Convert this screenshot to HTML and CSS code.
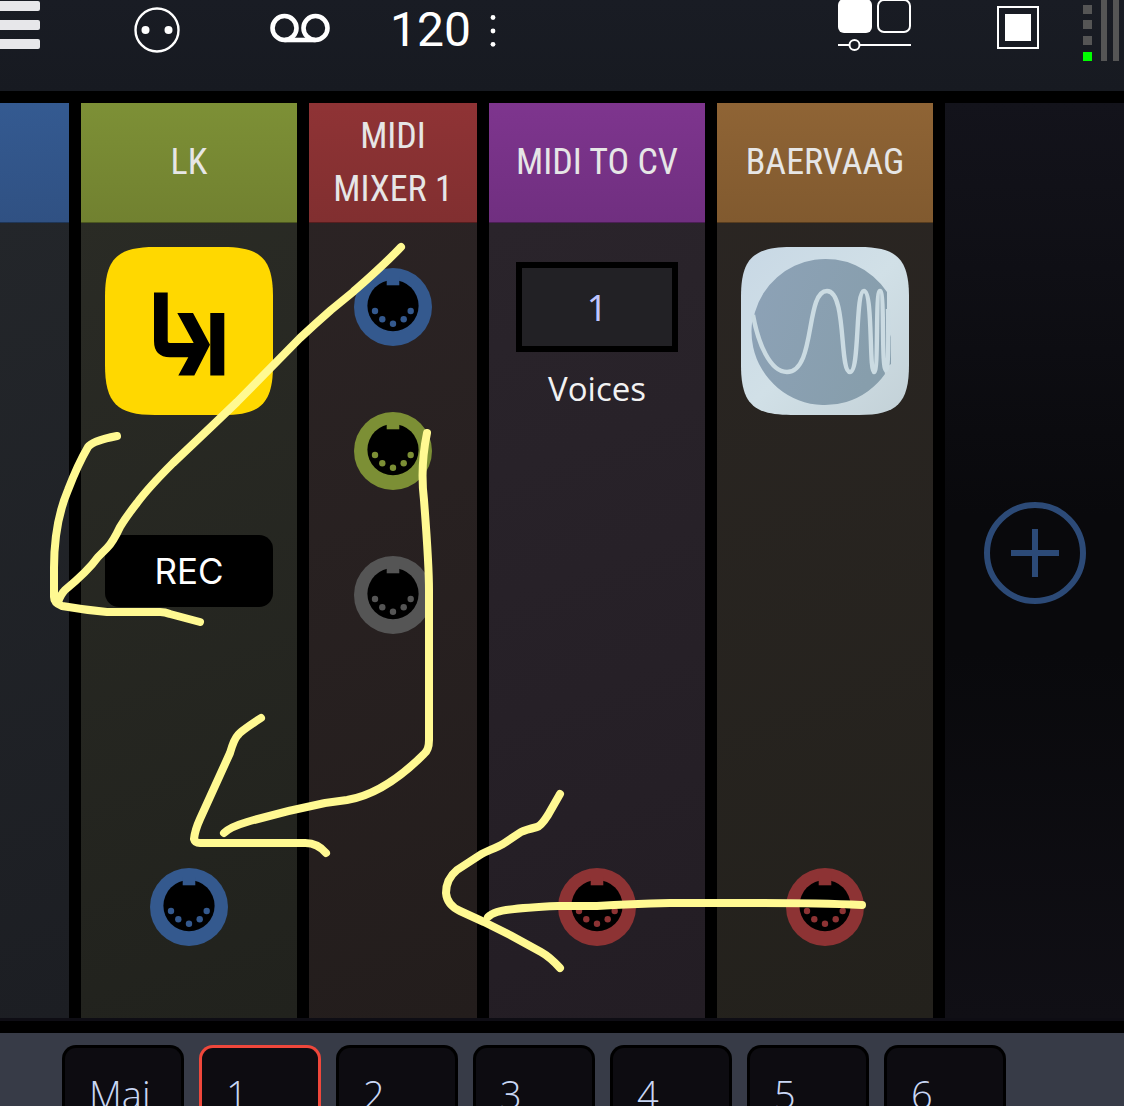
FILE: index.html
```html
<!DOCTYPE html>
<html lang="en">
	<head>
		<meta charset="UTF-8" />
		<title>Modular rack</title>
		<link rel="stylesheet" href="styles.css">
	</head>
	<body>
		<svg class="defs" aria-hidden="true">
			<symbol id="din" viewBox="0 0 78 78">
				<circle cx="39" cy="39" r="39" fill="currentColor"/>
				<circle cx="39" cy="37.7" r="25.6"/>
				<path d="M32.7 9h12.6v8.3H32.7z" fill="currentColor"/>
				<g fill="currentColor">
					<circle cx="21" cy="43" r="3.2"/>
					<circle cx="28.3" cy="51.3" r="3.2"/>
					<circle cx="39" cy="55.7" r="3.2"/>
					<circle cx="49.7" cy="51.3" r="3.2"/>
					<circle cx="56.7" cy="43" r="3.2"/>
				</g>
			</symbol>
		</svg>
		<header class="toolbar">
			<button class="menu" aria-label="Menu">
				<svg width="40" height="52" viewBox="0 0 40 52" fill="#e7e7ea">
					<rect x="-6" y="1" width="46" height="10" rx="2"/>
					<rect x="-6" y="20" width="46" height="10" rx="2"/>
					<rect x="-6" y="39" width="46" height="10" rx="2"/>
				</svg>
			</button>
			<button class="midi" aria-label="MIDI">
				<svg width="46" height="60" viewBox="0 0 46 60" fill="#fff">
					<circle cx="23" cy="30" r="21.5" fill="none" stroke="#fff" stroke-width="2.4"/>
					<circle cx="11.5" cy="30" r="4"/>
					<circle cx="34.5" cy="30" r="4"/>
				</svg>
			</button>
			<button class="tape" aria-label="Recorder">
				<svg width="60" height="60" viewBox="0 0 60 60" fill="none" stroke="#fff" stroke-width="4.6">
					<circle cx="14.5" cy="28" r="12"/>
					<circle cx="45.5" cy="28" r="12"/>
					<path d="M14.5 40h31"/>
				</svg>
			</button>
			<button class="tempo">120
				<svg width="8" height="60" viewBox="0 0 8 60" fill="#fff">
					<circle cx="4" cy="17.5" r="2.4"/>
					<circle cx="4" cy="31" r="2.4"/>
					<circle cx="4" cy="44.3" r="2.4"/>
				</svg>
			</button>
			<button class="view" aria-label="View">
				<svg width="74" height="60" viewBox="0 0 74 60" fill="none" stroke="#fff" stroke-width="2">
					<rect x="0" y="-1" width="34" height="34" rx="6" fill="#fff" stroke="none"/>
					<rect x="40" y="0" width="32" height="32" rx="6"/>
					<path d="M0 45h11M22 45h51"/>
					<circle cx="16.5" cy="45" r="5"/>
				</svg>
			</button>
			<button class="stop" aria-label="Stop">
				<svg width="42" height="60" viewBox="0 0 42 60">
					<rect x="1" y="7" width="40" height="41" fill="none" stroke="#fff" stroke-width="2"/>
					<rect x="8" y="14" width="26" height="27" fill="#fff"/>
				</svg>
			</button>
			<svg class="meter" width="41" height="62" viewBox="0 0 41 62" fill="#555">
				<path d="M0 5h9v9H0zM0 20h9v9H0zM0 36h9v9H0zM18 0h6v61h-6zM30 0h6v61h-6z"/>
				<path d="M0 52h9v9H0z" fill="#0f0"/>
			</svg>
		</header>

		<main class="rack">
			<section class="module blue">
				<h2></h2>
			</section>
			<section class="module green">
				<h2>LK</h2>
				<button class="app" aria-label="Open LK">
					<svg viewBox="0 0 168 168">
						<path fill="#ffd800" d="M0 50C0 12 12 0 50 0h68c38 0 50 12 50 50v68c0 38-12 50-50 50H50C12 168 0 156 0 118z"/>
						<path d="M49 45.5h13.7V94q0 2 2 2h24L72.3 66H88l17 31.7-15.7 30.8h-16l10-18.2H65Q49 110 49 94zM105.3 66h14v62.5h-14z"/>
					</svg>
				</button>
				<button class="rec">REC</button>
				<button class="port blue-port last" aria-label="LK MIDI"><svg><use href="#din"/></svg></button>
			</section>
			<section class="module red">
				<h2>MIDI MIXER 1</h2>
				<div class="ports">
					<button class="port blue-port" aria-label="Input 1"><svg><use href="#din"/></svg></button>
					<button class="port green-port" aria-label="Input 2"><svg><use href="#din"/></svg></button>
					<button class="port grey-port" aria-label="Input 3"><svg><use href="#din"/></svg></button>
				</div>
			</section>
			<section class="module purple">
				<h2>MIDI TO CV</h2>
				<input class="voices" id="voices" type="text" value="1">
				<label for="voices">Voices</label>
				<button class="port red-port last" aria-label="CV MIDI"><svg><use href="#din"/></svg></button>
			</section>
			<section class="module brown">
				<h2>BAERVAAG</h2>
				<button class="app" aria-label="Open Baervaag">
					<svg viewBox="0 0 168 168">
						<defs>
							<linearGradient id="sky" x2="1" y2="1">
								<stop offset="0" stop-color="#c8d8e5"/>
								<stop offset=".5" stop-color="#d1e0e7"/>
								<stop offset="1" stop-color="#c3d1d7"/>
							</linearGradient>
							<linearGradient id="disc" x2="1" y2=".4">
								<stop offset="0" stop-color="#8da2b7"/>
								<stop offset="1" stop-color="#879eac"/>
							</linearGradient>
						</defs>
						<path fill="url(#sky)" d="M0 50C0 12 12 0 50 0h68c38 0 50 12 50 50v68c0 38-12 50-50 50H50C12 168 0 156 0 118z"/>
						<path fill="url(#disc)" d="M146 45A73.5 73.5 0 0 0 14 65L11 76A73.5 73.5 0 0 0 144 127L143 122 150 117V90L146 80z"/>
						<path fill="none" stroke="#cbdbe2" stroke-width="4.4" d="M12 68C17 96 29 125 46 125C75 125 64 44 86 44C106 44 98 125 109 125C119 125 114 44 123 44C132 44 128 125 133 125C138 125 134 44 139 44C144 44 140 123 145 123Q148 123 147 62"/>
					</svg>
				</button>
				<button class="port red-port last" aria-label="Baervaag MIDI"><svg><use href="#din"/></svg></button>
			</section>
			<section class="add">
				<button aria-label="Add module">
					<svg width="102" height="102" viewBox="0 0 102 102" fill="none" stroke="#2c4a77" stroke-width="6">
						<circle cx="51" cy="51" r="48"/>
						<path d="M51 27v48M27 51h48"/>
					</svg>
				</button>
			</section>
		</main>

		<footer class="scenes">
			<button>Mai</button>
			<button class="active">1</button>
			<button>2</button>
			<button>3</button>
			<button>4</button>
			<button>5</button>
			<button>6</button>
		</footer>

		<!-- hand drawn arrows on top of the rack -->
		<svg class="ink" width="1124" height="1106" viewBox="0 0 1124 1106" aria-hidden="true">
			<path d="M401 247C385 264 370 277 353 292L331 310Q315 324 300 338L237 402L213 425L173 463Q148 488 137 503Q126 517 120 527Q113 542 107 548L98 557Q88 571 65 590Q61 594 58 602"/>
			<path d="M117 436Q92 441 88 447Q78 464 68 490Q54 523 54 568V597Q54 603 62 606Q85 610 107 612H160Q165 612 170 614L200 622"/>
			<path d="M427 433Q420 467 424 500Q429 565 429 590V740Q429 750 424 754Q384 794 347 800L325 803Q285 811 247 822Q230 827 224 833"/>
			<path d="M261 718Q241 731 238 735Q234 739 230 753L200 819Q195 830 194 839Q195 843 200 843H303Q317 842 326 853"/>
			<path d="M862 905Q820 903 763 903H670Q630 904 597 906H558Q510 908 497 912Q491 914 488 917"/>
			<path d="M560 794L548 815Q541 826 537 827Q525 830 521 832L503 844C494 849 486 851 480 855L457 870Q446 879 446 893Q447 905 460 911L484 922L510 935L541 952Q550 957 560 968"/>
		</svg>
	</body>
</html>
```
FILE: styles.css
```css
* { box-sizing: border-box; }
body { margin: 0; height: 100vh; display: flex; flex-direction: column; overflow: hidden;
	background: #000; color: #e6e6e6; font-family: "Open Sans", sans-serif; position: relative; }
button { padding: 0; border: 0; background: none; color: inherit; font: inherit; cursor: pointer; }
svg { display: block; }
.defs { position: absolute; width: 0; height: 0; }

.toolbar { flex: none; display: flex; align-items: flex-start; height: 91px; background: linear-gradient(#191c24, #171a21); }
.midi { margin-left: 94px; }
.tape { margin-left: 90px; }
.tempo { display: flex; gap: 18px; margin-left: 60px; color: #fff; font: 48px/60px Roboto, sans-serif; }
.view { margin-left: auto; }
.stop { margin-left: 85px; }
.meter { margin-left: 44px; }

.rack { flex: 1; min-height: 0; display: grid; grid-template-columns: 69px 216px 168px 216px 216px 1fr; column-gap: 12px;
	margin-top: 12px; border-bottom: 3px solid #0e0d14; }
.module { display: flex; flex-direction: column; align-items: center; padding-bottom: 72px; }
.module h2 { display: flex; align-items: center; justify-content: center; align-self: stretch; flex: none;
	height: 120px; margin: 0; padding: 0 16px; border-bottom: 1px solid rgba(0, 0, 0, .4); text-align: center;
	font: 36px/53px "Roboto Condensed", "Liberation Sans Narrow", sans-serif; }
.blue { background: linear-gradient(160deg, #24272b, #1c1e23); }
.blue h2 { background: linear-gradient(#345a91, #305183); }
.green { background: linear-gradient(160deg, #2b2c26, #21221d); }
.green h2 { background: linear-gradient(#7d9036, #718130); }
.red { background: linear-gradient(160deg, #2c2425, #231d1c); }
.red h2 { background: linear-gradient(#8f3335, #812f30); }
.purple { background: linear-gradient(160deg, #2b252c, #231d24); }
.purple h2 { background: linear-gradient(#7e358e, #702f80); }
.brown { background: linear-gradient(160deg, #2b2623, #23211c); }
.brown h2 { background: linear-gradient(#8f6435, #815a2f); }

.app { width: 168px; height: 168px; margin-top: 24px; }
.rec { width: 168px; height: 72px; margin-top: 120px; border-radius: 14px; background: #000; color: #fff;
	font: 35px Inter, sans-serif; }
.port, .port svg { width: 78px; height: 78px; }
.last { margin-top: auto; }
.ports { display: flex; flex-direction: column; gap: 66px; margin-top: 45px; }
.blue-port { color: #34598e; }
.green-port { color: #7c8f35; }
.grey-port { color: #555; }
.red-port { color: #8d3334; }
.voices { width: 162px; height: 90px; margin-top: 39px; padding: 0; border: 6px solid #000; border-radius: 0;
	background: #222125; color: #bfc5ff; font: 36px "Noto Sans", sans-serif; text-align: center; }
.module label { margin-top: 12px; color: #f2f2f2; font-size: 33px; line-height: 50px; }
.add { display: flex; align-items: center; justify-content: center;
	background: linear-gradient(#13131b, #09090c 45%, #09090c 60%, #100f15); }
.add button { margin-bottom: 15px; }

.scenes { flex: none; display: flex; gap: 15px; height: 73px; margin-top: 12px; padding: 12px 62px; overflow: hidden;
	background: #373b47; }
.scenes button { flex: none; width: 122px; height: 94px; padding: 0 24px; border: 3px solid #000; border-bottom: 0;
	border-radius: 14px 14px 0 0; background: #0d0c11; color: #c9d7f4; font-size: 38px; font-weight: 300; line-height: 50px; text-align: left; }
.scenes .active { border-color: #ef473b; }

.ink { position: absolute; top: 0; left: 0; fill: none; stroke: #fff992; stroke-width: 8;
	stroke-linecap: round; stroke-linejoin: round; pointer-events: none; }
```
